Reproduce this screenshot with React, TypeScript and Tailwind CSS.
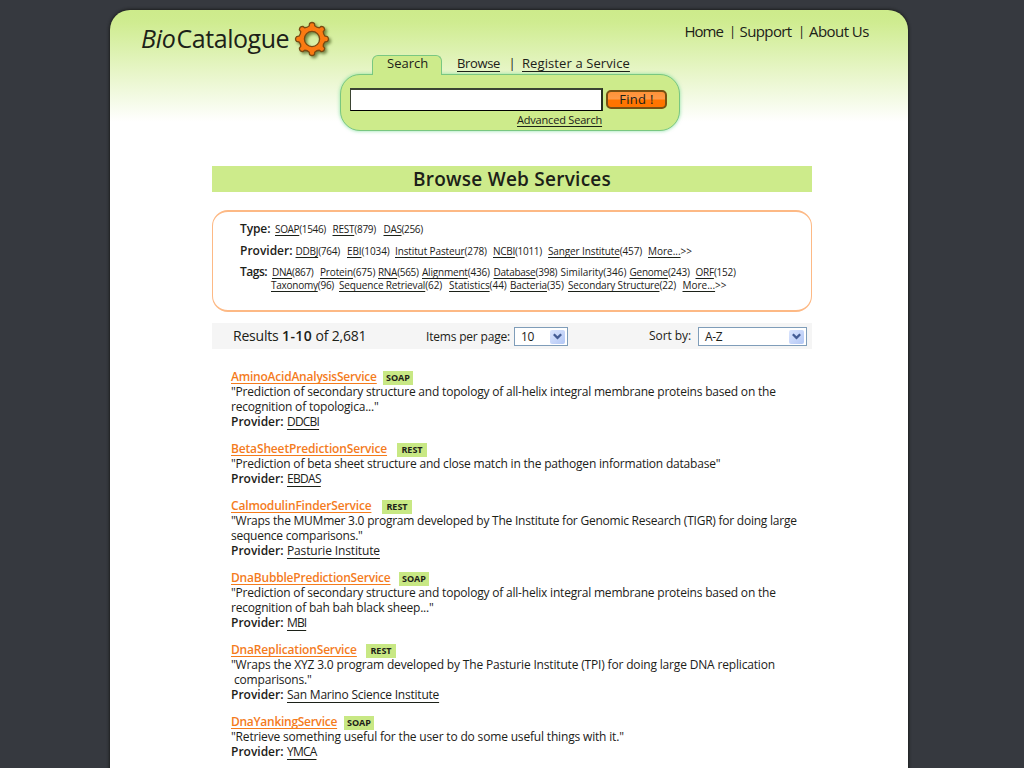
import type { ReactNode } from "react";

type Facet = { name: string; count?: string; cls: string; plain?: boolean };

const providers: Facet[] = [
  { name: "DDBJ", count: "(764)", cls: "w-[51.5px] tracking-[-0.25px]" },
  { name: "EBI", count: "(1034)", cls: "w-[48px] tracking-[-0.1px]" },
  { name: "Institut Pasteur", count: "(278)", cls: "w-[98px] tracking-[-0.12px]" },
  { name: "NCBI", count: "(1011)", cls: "w-[55px] tracking-[-0.3px]" },
  { name: "Sanger Institute", count: "(457)", cls: "w-[100px] tracking-[-0.12px]" },
  { name: "More...", count: ">>", cls: "w-[60px] tracking-[0px]" },
];

const tagsFirst: Facet[] = [
  { name: "DNA", count: "(867)", cls: "w-[48px] tracking-[-0.35px]" },
  { name: "Protein", count: "(675)", cls: "w-[58px] tracking-[-0.15px]" },
  { name: "RNA", count: "(565)", cls: "w-[44px] tracking-[-0.3px]" },
  { name: "Alignment", count: "(436)", cls: "w-[71.5px] tracking-[-0.2px]" },
  { name: "Database", count: "(398)", cls: "w-[67px] tracking-[-0.25px]" },
  { name: "Similarity", count: "(346)", cls: "w-[69px] tracking-[-0.02px]", plain: true },
  { name: "Genome", count: "(243)", cls: "w-[66px] tracking-[-0.25px]" },
  { name: "ORF", count: "(152)", cls: "w-[60px] tracking-[-0.25px]" },
];

const tagsSecond: Facet[] = [
  { name: "Taxonomy", count: "(96)", cls: "w-[68px] tracking-[-0.25px]" },
  { name: "Sequence Retrieval", count: "(62)", cls: "w-[110px] tracking-[-0.14px]" },
  { name: "Statistics", count: "(44)", cls: "w-[61px] tracking-[-0.05px]" },
  { name: "Bacteria", count: "(35)", cls: "w-[58px] tracking-[-0.15px]" },
  { name: "Secondary Structure", count: "(22)", cls: "w-[114.5px] tracking-[-0.18px]" },
  { name: "More...", count: ">>", cls: "w-[60px] tracking-[0px]" },
];

const types: Facet[] = [
  { name: "SOAP", count: "(1546)", cls: "w-[57.5px] tracking-[-0.34px]" },
  { name: "REST", count: "(879)", cls: "w-[51px] tracking-[-0.25px]" },
  { name: "DAS", count: "(256)", cls: "w-[60px] tracking-[-0.35px]" },
];

const services = [
  {
    title: "AminoAcidAnalysisService", width: "w-[152px] tracking-[-0.22px]", kind: "SOAP", body: "tracking-[-0.2px]",
    lines: ['"Prediction of secondary structure and topology of all-helix integral membrane proteins based on the', 'recognition of topologica..."'],
    provider: "DDCBI", link: "tracking-[-0.8px]",
  },
  {
    title: "BetaSheetPredictionService", width: "w-[166px] tracking-[-0.15px]", kind: "REST", body: "tracking-[-0.2px]",
    lines: ['"Prediction of beta sheet structure and close match in the pathogen information database"'],
    provider: "EBDAS", link: "tracking-[-0.7px]",
  },
  {
    title: "CalmodulinFinderService", width: "w-[151px] tracking-[-0.17px]", kind: "REST", body: "tracking-[-0.235px]",
    lines: ['"Wraps the MUMmer 3.0 program developed by The Institute for Genomic Research (TIGR) for doing large', 'sequence comparisons."'],
    provider: "Pasturie Institute", link: "tracking-[-0.14px]",
  },
  {
    title: "DnaBubblePredictionService", width: "w-[168px] tracking-[-0.2px]", kind: "SOAP", body: "tracking-[-0.2px]",
    lines: ['"Prediction of secondary structure and topology of all-helix integral membrane proteins based on the', 'recognition of bah bah black sheep..."'],
    provider: "MBI", link: "tracking-[-0.9px]",
  },
  {
    title: "DnaReplicationService", width: "w-[135px] tracking-[-0.17px]", kind: "REST", body: "tracking-[-0.17px]",
    lines: ['"Wraps the XYZ 3.0 program developed by The Pasturie Institute (TPI) for doing large DNA replication', '\u00a0comparisons."'],
    provider: "San Marino Science Institute", link: "tracking-[-0.22px]",
  },
  {
    title: "DnaYankingService", width: "w-[113px] tracking-[-0.28px]", kind: "SOAP", body: "tracking-[-0.17px]",
    lines: ['"Retrieve something useful for the user to do some useful things with it."'],
    provider: "YMCA", link: "tracking-[-0.8px]",
  },
];

function gearPath(): string {
  const at = (deg: number, r: number) => {
    const a = (deg * Math.PI) / 180;
    return `${(19 + r * Math.cos(a)).toFixed(2)} ${(19 + r * Math.sin(a)).toFixed(2)}`;
  };
  let d = `M${at(-90 - 9, 15.6)}`;
  for (let k = 0; k < 8; k++) {
    const b = k * 45 - 90;
    d += `Q${at(b, 17.6)} ${at(b + 9, 15.6)}L${at(b + 12, 13.4)}Q${at(b + 22.5, 12.2)} ${at(b + 33, 13.4)}L${at(b + 36, 15.6)}`;
  }
  return `${d}ZM26.6 19a7.6 7.6 0 1 0-15.2 0a7.6 7.6 0 1 0 15.2 0Z`;
}

function Gear() {
  return (
    <svg className="size-[38px] drop-shadow-[2px_2px_1.5px_rgba(60,80,20,0.65)]" viewBox="0 0 38 38">
      <path d={gearPath()} fill="#fb7a12" fillRule="evenodd" stroke="#7a4a12" strokeWidth="1.3" strokeLinejoin="round" />
    </svg>
  );
}

function FacetRow({ items }: { items: Facet[] }) {
  return (
    <div className="flex text-[10px] whitespace-nowrap">
      {items.map((f) => (
        <span key={f.name} className={`shrink-0 ${f.cls}`}>
          <a className={f.plain ? "" : "underline underline-offset-[1.5px]"}>{f.name}</a>
          {f.count}
        </span>
      ))}
    </div>
  );
}

function Label({ children, className }: { children: ReactNode; className: string }) {
  return <span className={`shrink-0 text-[12px] font-semibold ${className}`}>{children}</span>;
}

function Select({ value, className }: { value: string; className: string }) {
  return (
    <div className={`flex h-[19px] items-center justify-between border border-[#7f9db9] bg-white pr-[2px] pl-[6px] text-[12px] ${className}`}>
      <span className="tracking-[-0.3px]">{value}</span>
      <span className="flex h-[14px] w-[15px] items-center justify-center rounded-[2px] bg-gradient-to-br from-[#dbe5fd] to-[#b3c7f5]">
        <svg className="h-[7px] w-[9px]" viewBox="0 0 9 7">
          <path d="M0.8 1.2L4.5 4.9L8.2 1.2" fill="none" stroke="#445c94" strokeWidth="2.3" />
        </svg>
      </span>
    </div>
  );
}

export default function App() {
  return (
    <div className="h-[768px] w-[1024px] overflow-hidden bg-[#36393f] pt-[9.5px] pl-[109.5px] font-['Open_Sans',sans-serif] text-[#1c2118] [text-decoration-skip-ink:none]">
      <div className="h-[780px] w-[798.5px] rounded-t-[20px] bg-white bg-[linear-gradient(to_bottom,#cdeb8b_0px,#cfec90_12px,#ffffff_112px)] pt-[0.5px] pl-[0.5px] shadow-[0_0_3px_1px_rgba(20,22,20,0.75)]">
        <header className="flex h-[45px] justify-between pr-[39px] pl-[31px]">
          <div className="flex">
            <div className="pt-[10px] text-[25px] leading-[36px] whitespace-nowrap">
              <span className="inline-block w-[35.5px] tracking-[-0.3px] italic">Bio</span>
              <span className="inline-block w-[116px] tracking-[-0.45px]">Catalogue</span>
            </div>
            <div className="pt-[10px]"><Gear /></div>
          </div>
          <nav className="flex pt-[10px] text-[15px] leading-[22px] whitespace-nowrap">
            <a className="w-[44.5px] tracking-[-1px]">Home</a>
            <span className="w-[10.5px] text-[13px]">|</span>
            <a className="w-[58.5px] tracking-[-0.6px]">Support</a>
            <span className="w-[11px] text-[13px]">|</span>
            <a className="w-[60px] tracking-[-0.55px]">About Us</a>
          </nav>
        </header>

        <section className="ml-[230px] h-[111px] w-[340px]">
          <div className="flex h-[19px] pl-[32px] text-[13px] leading-[17px] whitespace-nowrap">
            <div className="relative z-10 h-[20px] w-[70px] shrink-0 rounded-t-[6px] border border-b-0 border-[#79c781] bg-[#cdeb8b] pl-[14px] leading-[15px]">Search</div>
            <a className="ml-[15px] w-[51.5px] tracking-[-0.35px] underline underline-offset-[3px]">Browse</a>
            <span className="w-[13.5px]">|</span>
            <a className="tracking-[0.1px] underline underline-offset-[3px]">Register a Service</a>
          </div>
          <div className="h-[57px] w-[340px] rounded-[20px] border border-[#79c781] bg-[#cdeb8b] pt-[13px] pl-[9px] shadow-[0_0_3px_1px_rgba(120,220,150,0.5)]">
            <div className="flex items-center gap-[3px]">
              <input aria-label="Search services" className="h-[23px] w-[253px] border border-t-2 border-r-2 border-t-[#3b4433] border-r-[#26301f] border-b-black border-l-[#3b4433] bg-white px-1 outline-none" />
              <button className="flex h-[19px] w-[61px] items-center justify-center rounded-[5px] border-2 border-[#775012] bg-[linear-gradient(to_bottom,#ff9238_0%,#ff9a48_45%,#ff7400_55%,#ff7400_100%)] pb-px text-[13px] leading-[14px] tracking-[0.3px]">Find !</button>
            </div>
            <a className="mt-px ml-[167px] block text-[11px] leading-[15px] tracking-[-0.19px] whitespace-nowrap underline underline-offset-2">Advanced Search</a>
          </div>
        </section>

        <main className="ml-[102px] w-[600px]">
          <h1 className="h-[26px] bg-[#cdeb8b] text-center text-[19px] leading-[26px] font-semibold tracking-[0.25px]">Browse Web Services</h1>

          <section className="mt-[18px] h-[102px] rounded-[16px] border-2 border-r-[1.5px] border-l-[1.5px] border-[#fdb985] pl-[27px]">
            <div className="mt-[8px] flex h-[18px] leading-[18px]">
              <Label className="w-[35px] tracking-[-0.1px]">Type:</Label>
              <FacetRow items={types} />
            </div>
            <div className="mt-[4px] flex h-[18px] leading-[18px]">
              <Label className="w-[55.5px] tracking-[0px]">Provider:</Label>
              <FacetRow items={providers} />
            </div>
            <div className="mt-[3px] flex h-[18px] leading-[18px]">
              <Label className="w-[32px] tracking-[-0.5px]">Tags:</Label>
              <FacetRow items={tagsFirst} />
            </div>
            <div className="-mt-[5px] ml-[31px] h-[18px] leading-[18px]">
              <FacetRow items={tagsSecond} />
            </div>
          </section>

          <section className="mt-[11px] flex h-[26px] items-center bg-[#f5f5f5] pl-[21px] text-[12px] whitespace-nowrap">
            <p className="w-[193px] pb-[2px] text-[14px] tracking-[-0.2px]">
              Results <span className="font-semibold tracking-[0.4px]">1-10</span> of 2,681
            </p>
            <span className="w-[88px] pt-px tracking-[-0.19px]">Items per page:</span>
            <Select value="10" className="mt-px w-[54px]" />
            <span className="ml-[81px] w-[49px] tracking-[-0.08px]">Sort by:</span>
            <Select value="A-Z" className="mt-px w-[109px]" />
          </section>

          <ul className="mt-[20px] flex flex-col gap-[12px] pl-[19px] text-[12px] leading-[15px] whitespace-nowrap">
            {services.map((s) => (
              <li key={s.title}>
                <div className="flex h-[15px] items-center">
                  <a className={`shrink-0 font-semibold text-[#f47b1c] underline underline-offset-2 ${s.width}`}>{s.title}</a>
                  <span className="mt-[3px] flex h-[14px] w-[30px] items-center justify-center bg-[#c8e884] text-[9px] leading-[14px] font-bold">{s.kind}</span>
                </div>
                {s.lines.map((line) => (
                  <p key={line} className={s.body}>{line}</p>
                ))}
                <p className="flex">
                  <span className="w-[56px] font-semibold tracking-[0px]">Provider:</span>
                  <a className={`underline underline-offset-[3px] ${s.link}`}>{s.provider}</a>
                </p>
              </li>
            ))}
          </ul>
        </main>
      </div>
    </div>
  );
}
